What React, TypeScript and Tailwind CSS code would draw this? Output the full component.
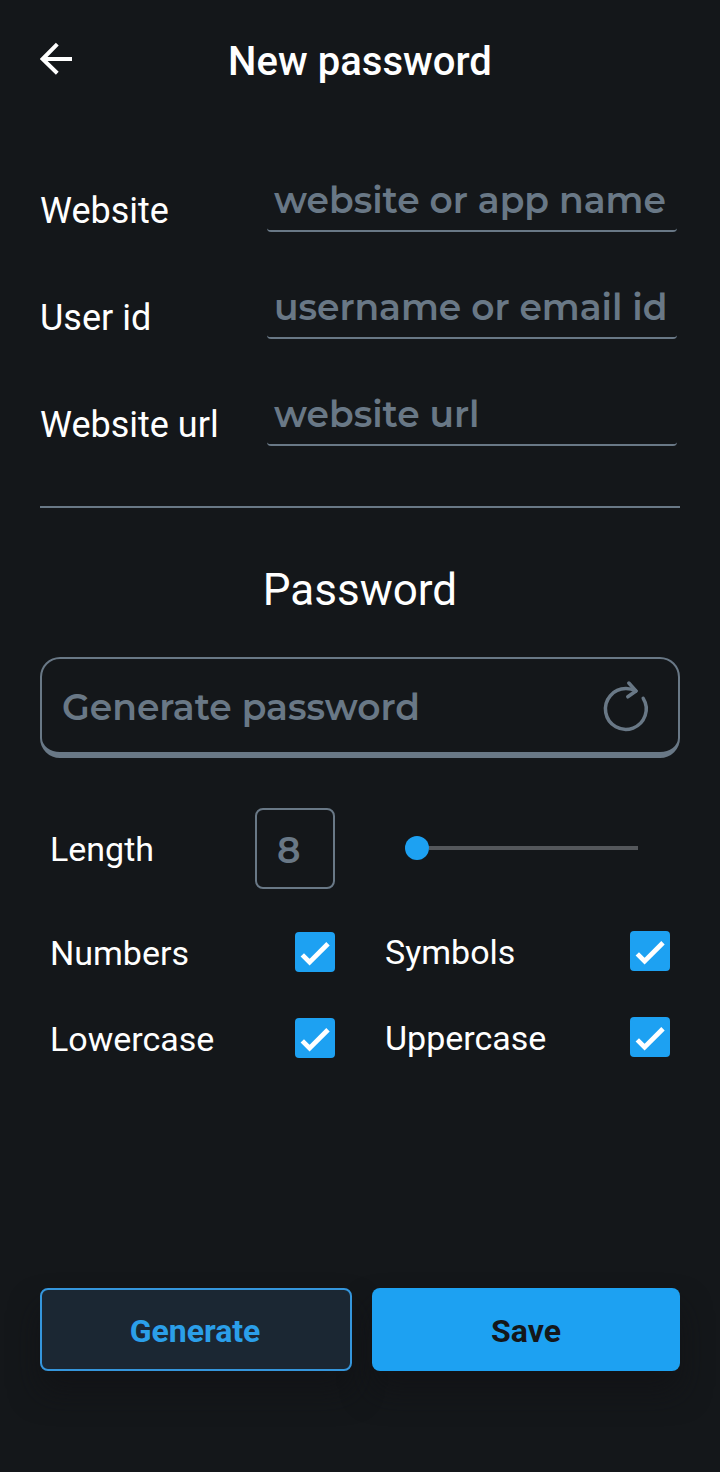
import React from "react";

const fields = [
  { label: "Website", hint: "website or app name" },
  { label: "User id", hint: "username or email id" },
  { label: "Website url", hint: "website url" },
];

function Check() {
  return (
    <span className="mb-[2px] block size-10 rounded-[4px] bg-[#1da1f2]" role="checkbox" aria-checked="true">
      <svg viewBox="0 0 40 40" className="size-10" fill="none" stroke="#fff" strokeWidth="4.8">
        <path d="M7.3 22.9 L14.6 30.2 L33 11.8" />
      </svg>
    </span>
  );
}

function Option({ label }: { label: string }) {
  return (
    <div className="flex h-[86px] items-center justify-between">
      <span className="text-[34px] leading-10">{label}</span>
      <Check />
    </div>
  );
}

export default function App() {
  return (
    <div className="flex h-[1472px] w-[720px] flex-col bg-[#14171a] px-10 font-['Roboto',sans-serif] text-white">
      <header className="grid h-[125px] grid-cols-[40px_1fr_40px] items-start">
        <svg viewBox="0 0 40 40" className="mt-[39px] size-10" fill="none" stroke="#fff" strokeWidth="4">
          <path d="M32 20 H3 M17.3 5.2 L2.6 20 L17.3 34.2" />
        </svg>
        <h1 className="mt-[39px] text-center text-[40px] font-medium leading-[46px] tracking-[0.05px]">New password</h1>
      </header>

      {fields.map((f) => (
        <div key={f.label} className="flex h-[107px] items-end justify-between">
          <span className="pb-px text-[36px] leading-10">{f.label}</span>
          <div className="mr-[3px] w-[410px] rounded-b-[4px] border-b-2 border-[#697886] pb-2 pl-[7px]">
            <span className="block whitespace-nowrap font-['Montserrat','Inter',sans-serif] text-[36px] font-semibold leading-[44px] text-[#697886]">
              {f.hint}
            </span>
          </div>
        </div>
      ))}

      <div className="mt-[60px] h-[2px] bg-[#697886]" />

      <h2 className="mt-[56px] text-center text-[44px] leading-[52px]">Password</h2>

      <div className="mt-[41px] flex h-[101px] items-center justify-between rounded-[20px] border-2 border-b-[6px] border-[#697886] pl-5 pr-[26px]">
        <span className="whitespace-nowrap pt-[3px] font-['Montserrat','Inter',sans-serif] text-[36px] font-semibold leading-[44px] text-[#697886]">
          Generate password
        </span>
        <svg
          viewBox="0 0 52 56"
          className="h-14 w-[52px]"
          fill="none"
          stroke="#697886"
          strokeWidth="3.5"
          strokeLinecap="round"
          strokeLinejoin="round"
        >
          <path d="M43.2 20.3 A20.4 20.4 0 1 1 26 10.6 Q31 10.6 36 13" />
          <path d="M28.8 5 L36 13 L27.8 18.8" />
        </svg>
      </div>

      <div className="mt-[50px] flex h-[81px] items-center pl-[10px]">
        <span className="w-[205px] text-[34px] leading-10">Length</span>
        <div className="flex h-[81px] w-20 items-center rounded-lg border-2 border-[#697886] pl-5">
          <span className="pt-[3px] font-['Montserrat','Inter',sans-serif] text-[36px] font-semibold leading-[44px] text-[#697886]">8</span>
        </div>
        <div className="mb-[2px] ml-[70px] flex w-[233px] items-center">
          <span className="size-6 rounded-full bg-[#1da1f2]" />
          <span className="h-1 flex-1 bg-[#54575b]" />
        </div>
      </div>

      <div className="grid grid-cols-[285px_285px] gap-x-[50px] px-[10px] pt-5">
        <div className="pt-px">
          <Option label="Numbers" />
          <Option label="Lowercase" />
        </div>
        <div>
          <Option label="Symbols" />
          <Option label="Uppercase" />
        </div>
      </div>

      <div className="mb-[101px] mt-auto flex gap-5">
        <div className="rounded-lg shadow-[0_20px_30px_rgba(16,16,20,0.6)]">
          <button className="relative z-10 h-[83px] w-[312px] rounded-lg border-2 border-[#3596dc] bg-[#1b2733] pr-[2px] pt-[3px] text-[32px] font-bold text-[#2b9fe9]">
            Generate
          </button>
        </div>
        <div className="rounded-lg shadow-[0_20px_30px_rgba(16,16,20,0.6)]">
          <button className="relative z-10 h-[83px] w-[308px] rounded-lg bg-[#1da1f2] pt-[3px] text-[32px] font-bold text-[#14171a]">
            Save
          </button>
        </div>
      </div>
    </div>
  );
}
